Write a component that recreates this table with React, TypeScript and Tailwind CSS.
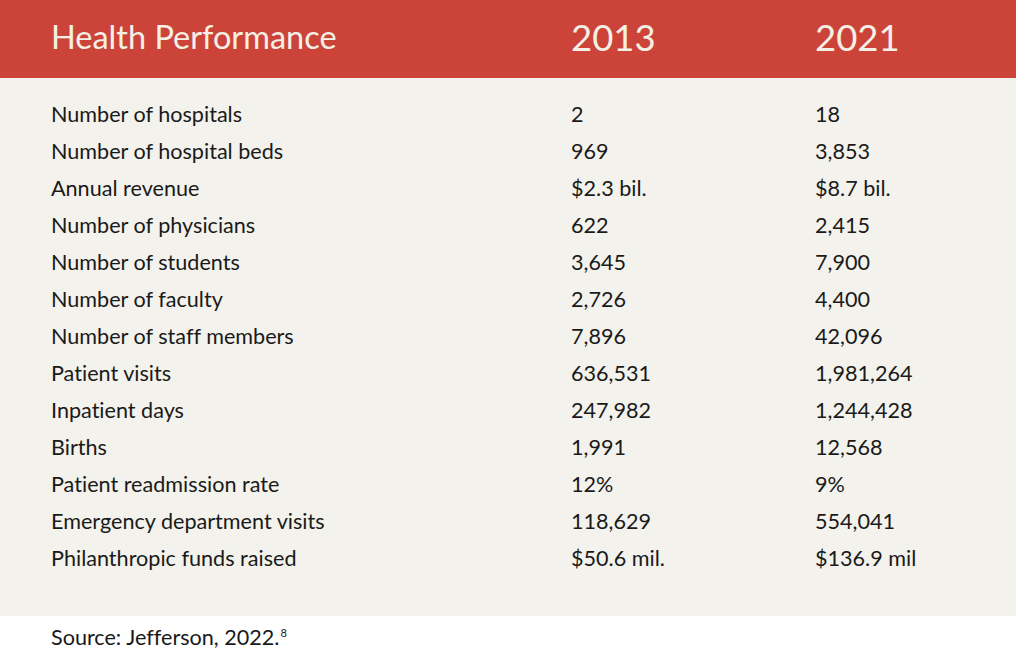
const rows: [string, string, string][] = [
  ["Number of hospitals", "2", "18"],
  ["Number of hospital beds", "969", "3,853"],
  ["Annual revenue", "$2.3 bil.", "$8.7 bil."],
  ["Number of physicians", "622", "2,415"],
  ["Number of students", "3,645", "7,900"],
  ["Number of faculty", "2,726", "4,400"],
  ["Number of staff members", "7,896", "42,096"],
  ["Patient visits", "636,531", "1,981,264"],
  ["Inpatient days", "247,982", "1,244,428"],
  ["Births", "1,991", "12,568"],
  ["Patient readmission rate", "12%", "9%"],
  ["Emergency department visits", "118,629", "554,041"],
  ["Philanthropic funds raised", "$50.6 mil.", "$136.9 mil"],
]

export default function App() {
  return (
    <div className="w-[1016px] h-[655px] bg-white font-['Lato',sans-serif] [font-variant-ligatures:none] text-[#1a1a1a] overflow-hidden">
      <div className="h-[78px] bg-[#cc4439] text-[#f4f0e6] flex items-center pl-[51px] pb-[4px]">
        <div className="w-[520px] text-[32.5px]">Health Performance</div>
        <div className="w-[244px] text-[36.5px]">2013</div>
        <div className="text-[36.5px]">2021</div>
      </div>
      <div className="h-[538px] bg-[#f3f2ec] pl-[51px] pt-[18px]">
        {rows.map(([label, a, b]) => (
          <div key={label} className="flex h-[37px] items-center text-[21.6px]">
            <div className="w-[520px]">{label}</div>
            <div className="w-[244px]">{a}</div>
            <div>{b}</div>
          </div>
        ))}
      </div>
      <div className="pl-[51px] pt-[5px] text-[21.6px]">
        Source: Jefferson, 2022.<sup className="text-[11px] align-[3px] ml-[1px]">8</sup>
      </div>
    </div>
  )
}
